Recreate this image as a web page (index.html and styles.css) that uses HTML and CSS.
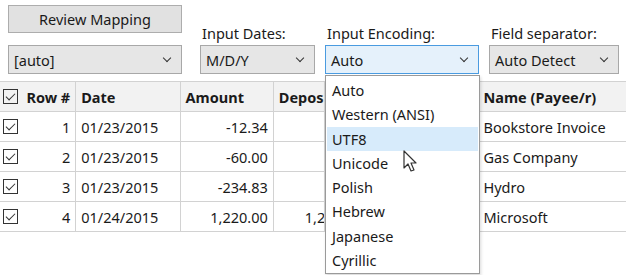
FILE: index.html
```html
<!DOCTYPE html>
<html lang="en">
<head>
    <meta charset="UTF-8">
    <title>Import Mapping</title>
    <link rel="stylesheet" href="styles.css">
</head>
<body>
    <div class="toolbar">
        <div class="field field-first">
            <button class="btn">Review Mapping</button>
            <div class="select w-account"><span>[auto]</span><i class="chev"></i></div>
        </div>
        <div class="field">
            <label>Input Dates:</label>
            <div class="select w-dates"><span>M/D/Y</span><i class="chev"></i></div>
        </div>
        <div class="field">
            <label>Input Encoding:</label>
            <div class="select w-enc focused"><span>Auto</span><i class="chev"></i></div>
        </div>
        <div class="field">
            <label>Field separator:</label>
            <div class="select w-sep"><span>Auto Detect</span><i class="chev"></i></div>
        </div>
    </div>

    <table class="grid">
        <thead>
            <tr>
                <th class="c-row"><span class="check"></span><span class="num">Row #</span></th>
                <th class="c-date">Date</th>
                <th class="c-amt">Amount</th>
                <th class="c-dep">Deposit</th>
                <th class="c-wd"></th>
                <th class="c-name">Name (Payee/r)</th>
            </tr>
        </thead>
        <tbody>
            <tr>
                <td class="c-row"><span class="check"></span><span class="num">1</span></td>
                <td>01/23/2015</td>
                <td class="r">-12.34</td>
                <td></td>
                <td></td>
                <td>Bookstore Invoice</td>
            </tr>
            <tr>
                <td class="c-row"><span class="check"></span><span class="num">2</span></td>
                <td>01/23/2015</td>
                <td class="r">-60.00</td>
                <td></td>
                <td></td>
                <td>Gas Company</td>
            </tr>
            <tr>
                <td class="c-row"><span class="check"></span><span class="num">3</span></td>
                <td>01/23/2015</td>
                <td class="r">-234.83</td>
                <td></td>
                <td></td>
                <td>Hydro</td>
            </tr>
            <tr>
                <td class="c-row"><span class="check"></span><span class="num">4</span></td>
                <td>01/24/2015</td>
                <td class="r">1,220.00</td>
                <td class="dep">1,220.00</td>
                <td></td>
                <td>Microsoft</td>
            </tr>
        </tbody>
    </table>

    <ul class="dropdown">
        <li>Auto</li>
        <li>Western (ANSI)</li>
        <li class="hover">UTF8</li>
        <li>Unicode</li>
        <li>Polish</li>
        <li>Hebrew</li>
        <li>Japanese</li>
        <li>Cyrillic</li>
    </ul>

    <svg class="cursor" width="16" height="24" viewBox="0 0 16 24">
        <path d="M1 1 L1 18 L5 14 L8 21 L11 20 L8 13 L13 13 Z" fill="#fff" stroke="#333" stroke-width="1.2" stroke-linejoin="round"/>
    </svg>
</body>
</html>
```

FILE: styles.css
```css
body {
    margin: 0;
    font-family: "Noto Sans", "Open Sans", sans-serif;
    font-size: 14.5px;
    color: #1a1a1a;
    background: #fff;
    position: relative;
    width: 626px;
    height: 275px;
    overflow: hidden;
}
.toolbar {
    display: flex;
    align-items: flex-end;
    padding: 5px 0 0 8px;
}
.field {
    display: flex;
    flex-direction: column;
    margin-right: 10px;
}
.field-first {
    margin-right: 18px;
}
.field label {
    height: 20px;
    line-height: 20px;
    margin: 0 0 2px 2px;
}
.btn {
    width: 174px;
    height: 28px;
    margin-bottom: 12px;
    border: 1px solid #adadad;
    background: #e1e1e1;
    font: inherit;
    color: #1a1a1a;
    padding: 0 0 1px;
}
.select {
    height: 29px;
    box-sizing: border-box;
    border: 1px solid #a8a8a8;
    background: #e6e6e6;
    display: flex;
    align-items: center;
    justify-content: space-between;
    padding: 0 11px 0 5px;
}
.select.focused {
    border: 1px solid #4a9be0;
    background: #e5f1fb;
}
.chev {
    width: 5px;
    height: 5px;
    border-right: 1.3px solid #333;
    border-bottom: 1.3px solid #333;
    transform: rotate(45deg);
    margin-top: -4px;
}
.w-account { width: 174px; }
.w-dates { width: 115px; }
.w-enc { width: 154px; }
.w-sep { width: 130px; }

.grid {
    border-collapse: collapse;
    table-layout: fixed;
    width: 640px;
    margin-top: 7px;
}
.grid th,
.grid td {
    border: 1px solid #d2d2d2;
    height: 29px;
    padding: 0 5px;
    white-space: nowrap;
    overflow: hidden;
    text-overflow: clip;
    text-align: left;
}
.grid th {
    background: #f2f2f2;
    font-weight: bold;
}
.grid tr > :first-child {
    border-left: none;
}
.grid .r {
    text-align: right;
}
.grid .dep {
    padding: 0 0 0 31px;
}
.grid tr > :last-child {
    padding-left: 7px;
}
.c-row { width: 67px; }
.c-date { width: 93px; }
.c-amt { width: 82px; }
.c-dep { width: 40px; }
.c-wd { width: 140px; }
.c-name { width: 150px; }
.grid .c-row {
    padding: 0 5px 0 3px;
}
.c-row .num {
    float: right;
    line-height: 16px;
}
.check {
    float: left;
    width: 13px;
    height: 13px;
    border: 1px solid #333;
    position: relative;
}
.check::after {
    content: "";
    position: absolute;
    left: 4px;
    top: 1px;
    width: 4px;
    height: 8px;
    border-right: 1.5px solid #333;
    border-bottom: 1.5px solid #333;
    transform: rotate(45deg);
}

.dropdown {
    position: absolute;
    left: 325px;
    top: 75px;
    width: 153px;
    margin: 0;
    padding: 2px 0 1px;
    list-style: none;
    background: #fff;
    border: 1px solid #9a9a9a;
    box-shadow: 1px 2px 3px rgba(0, 0, 0, .15);
}
.dropdown li {
    height: 24.3px;
    line-height: 24.3px;
    padding: 0 5px;
    margin: 0 1px;
}
.dropdown li.hover {
    background: #d7ebfb;
}
.cursor {
    position: absolute;
    left: 403px;
    top: 150px;
}
```
